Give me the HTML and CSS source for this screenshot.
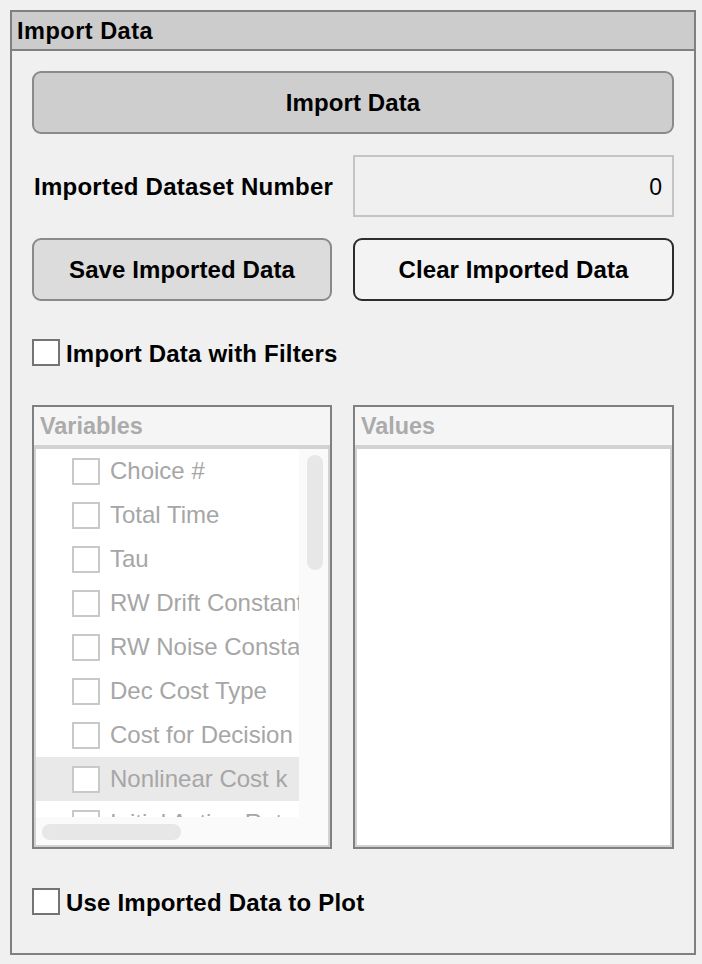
FILE: index.html
```html
<!DOCTYPE html>
<html>
<head>
<meta charset="utf-8">
<title>Import Data</title>
<link rel="stylesheet" href="styles.css">
</head>
<body>
<div class="panel">
  <div class="panel-title">Import Data</div>
  <div class="panel-body">
    <button class="btn btn-primary">Import Data</button>
    <div class="two-col row-field">
      <div class="field-label">Imported Dataset Number</div>
      <div class="num-field">0</div>
    </div>
    <div class="two-col row-buttons">
      <button class="btn btn-save">Save Imported Data</button>
      <button class="btn btn-clear">Clear Imported Data</button>
    </div>
    <div class="check-row row-filters">
      <span class="check-box"></span>
      <span class="check-label">Import Data with Filters</span>
    </div>
    <div class="two-col row-lists">
      <div class="listbox">
        <div class="lb-head">Variables</div>
        <div class="lb-frame lb-scroll">
          <div class="lb-items">
            <div class="lb-item"><span class="item-box"></span><span class="item-text">Choice #</span></div>
            <div class="lb-item"><span class="item-box"></span><span class="item-text">Total Time</span></div>
            <div class="lb-item"><span class="item-box"></span><span class="item-text">Tau</span></div>
            <div class="lb-item"><span class="item-box"></span><span class="item-text">RW Drift Constant</span></div>
            <div class="lb-item"><span class="item-box"></span><span class="item-text">RW Noise Constant</span></div>
            <div class="lb-item"><span class="item-box"></span><span class="item-text">Dec Cost Type</span></div>
            <div class="lb-item"><span class="item-box"></span><span class="item-text">Cost for Decision</span></div>
            <div class="lb-item is-hover"><span class="item-box"></span><span class="item-text">Nonlinear Cost k</span></div>
            <div class="lb-item"><span class="item-box"></span><span class="item-text">Initial Action Rate</span></div>
          </div>
          <div class="vscroll"><div class="vthumb"></div></div>
          <div class="hscroll"><div class="hthumb"></div></div>
          <div class="corner"></div>
        </div>
      </div>
      <div class="listbox">
        <div class="lb-head">Values</div>
        <div class="lb-frame"></div>
      </div>
    </div>
    <div class="check-row row-plot">
      <span class="check-box"></span>
      <span class="check-label">Use Imported Data to Plot</span>
    </div>
  </div>
</div>
</body>
</html>
```

FILE: styles.css
```css
* {
  box-sizing: border-box;
}

html, body {
  margin: 0;
  padding: 0;
  background: #f0f0f0;
  font-family: "Liberation Sans", Arial, Helvetica, sans-serif;
  color: #000;
}

.panel {
  margin: 10px;
  width: 686px;
  height: 945px;
  border: 2px solid #808080;
  background: #f0f0f0;
  display: flex;
  flex-direction: column;
}

.panel-title {
  height: 39px;
  line-height: 37px;
  padding-top: 1px;
  background: #cccccc;
  border-bottom: 2px solid #808080;
  padding-left: 5px;
  font-size: 23.5px;
  font-weight: bold;
  letter-spacing: 0.5px;
}

.panel-body {
  padding: 20px 20px 0 20px;
  display: flex;
  flex-direction: column;
}

.btn {
  font-family: "Liberation Sans", Arial, Helvetica, sans-serif;
  font-size: 24px;
  font-weight: bold;
  letter-spacing: 0.1px;
  color: #000;
  border-radius: 9px;
  border: 2px solid #8a8a8a;
  padding: 0;
  margin: 0;
  cursor: default;
}

.btn-primary {
  height: 63px;
  width: 100%;
  background: #cecece;
}

.two-col {
  display: grid;
  grid-template-columns: 300px 321px;
  column-gap: 21px;
}

.row-field {
  margin-top: 21px;
  height: 62px;
  align-items: center;
}

.field-label {
  font-size: 24px;
  font-weight: bold;
  letter-spacing: 0.25px;
  white-space: nowrap;
  padding-left: 2px;
  padding-top: 2px;
}

.num-field {
  height: 62px;
  border: 2px solid #c4c4c4;
  background: #f0f0f0;
  text-align: right;
  padding-right: 10px;
  line-height: 60px;
  font-size: 23px;
}

.row-buttons {
  margin-top: 21px;
  height: 63px;
}

.btn-save {
  height: 63px;
  background: #dcdcdc;
}

.btn-clear {
  height: 63px;
  background: #f3f3f3;
  border-color: #2c2c2c;
}

.check-row {
  display: flex;
  align-items: center;
  height: 27px;
}

.row-filters {
  margin-top: 38px;
}

.row-plot {
  margin-top: 39px;
}

.check-box {
  width: 28px;
  height: 27px;
  border: 2px solid #747474;
  background: #fff;
  flex: none;
}

.check-label {
  margin-left: 6px;
  font-size: 24px;
  font-weight: bold;
  letter-spacing: 0.2px;
  white-space: nowrap;
  line-height: 27px;
  padding-top: 1px;
}

.row-lists {
  margin-top: 39px;
  height: 444px;
}

.listbox {
  height: 444px;
  border: 2px solid #808080;
  display: flex;
  flex-direction: column;
}

.lb-head {
  height: 38px;
  line-height: 39px;
  background: #f5f5f5;
  padding-left: 6px;
  font-size: 23.4px;
  font-weight: bold;
  color: #ababab;
}

.lb-frame {
  flex: 1;
  border: 2px solid #d2d2d2;
  border-top-width: 4px;
  background: #fff;
}

.lb-scroll {
  display: grid;
  grid-template-columns: 1fr 29px;
  grid-template-rows: 1fr 28px;
  min-height: 0;
}

.lb-items {
  overflow: hidden;
  min-width: 0;
  min-height: 0;
}

.lb-item {
  height: 44px;
  display: flex;
  align-items: center;
  padding-left: 36px;
  white-space: nowrap;
}

.lb-item.is-hover {
  background: #e9e9e9;
}

.item-box {
  width: 28px;
  height: 27px;
  border: 2px solid #c9c9c9;
  background: #fff;
  flex: none;
}

.item-text {
  margin-left: 10px;
  font-size: 24px;
  color: #a6a6a6;
}

.vscroll {
  background: #fafafa;
  padding: 6px 5px 0 8px;
}

.vthumb {
  width: 16px;
  height: 115px;
  border-radius: 8px;
  background: #e7e7e7;
}

.hscroll {
  background: #fafafa;
  padding: 7px 0 0 6px;
}

.hthumb {
  width: 139px;
  height: 16px;
  border-radius: 8px;
  background: #e7e7e7;
}

.corner {
  background: #fafafa;
}
```
